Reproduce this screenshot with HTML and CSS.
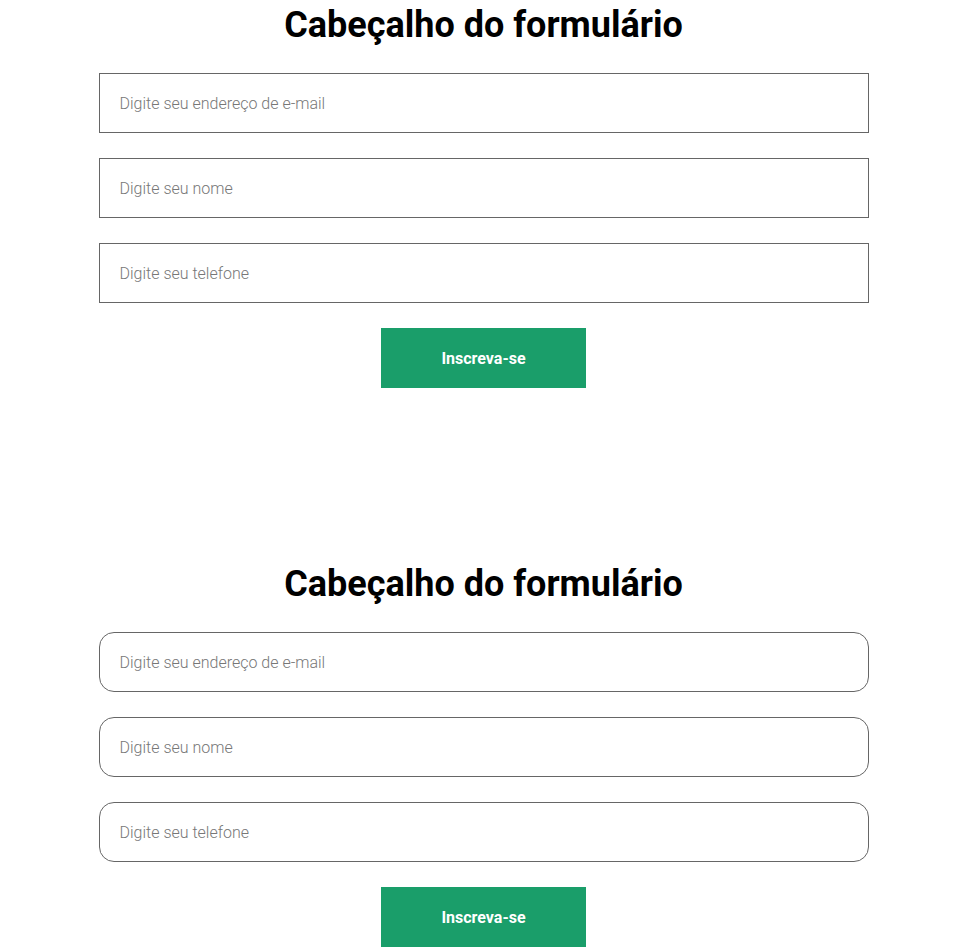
FILE: index.html
```html
<!DOCTYPE html>
<html lang="pt">
<head>
<meta charset="utf-8">
<title>Formulário</title>
<link rel="stylesheet" href="styles.css">
</head>
<body>
<main class="page">
  <form class="signup">
    <h1 class="signup-title">Cabeçalho do formulário</h1>
    <input class="field" type="email" placeholder="Digite seu endereço de e-mail">
    <input class="field" type="text" placeholder="Digite seu nome">
    <input class="field" type="tel" placeholder="Digite seu telefone">
    <button class="submit" type="button">Inscreva-se</button>
  </form>
  <form class="signup signup--rounded">
    <h1 class="signup-title">Cabeçalho do formulário</h1>
    <input class="field" type="email" placeholder="Digite seu endereço de e-mail">
    <input class="field" type="text" placeholder="Digite seu nome">
    <input class="field" type="tel" placeholder="Digite seu telefone">
    <button class="submit" type="button">Inscreva-se</button>
  </form>
</main>
</body>
</html>
```
FILE: styles.css
```css
html, body {
  margin: 0;
  padding: 0;
  background: #fff;
}
body {
  font-family: Roboto, "Liberation Sans", sans-serif;
}
.page {
  width: 770px;
  margin: 0 auto;
  padding-left: 10px;
  display: flex;
  flex-direction: column;
  gap: 171px;
}
.signup {
  display: flex;
  flex-direction: column;
  align-items: center;
  gap: 25px;
}
.signup-title {
  margin: 0 0 -2px;
  font-size: 36px;
  font-weight: 700;
  line-height: 50px;
  color: #000;
  text-align: center;
}
.field {
  box-sizing: border-box;
  width: 100%;
  height: 60px;
  margin: 0;
  padding: 0 20px;
  border: 1px solid #666;
  border-radius: 0;
  background: #fff;
  font-family: Roboto, sans-serif;
  font-size: 16px;
  font-weight: 300;
  color: #333;
  outline: none;
}
.field::placeholder {
  color: #777;
  opacity: 1;
}
.signup--rounded .field {
  border-radius: 15px;
}
.submit {
  box-sizing: border-box;
  width: 205px;
  height: 60px;
  border: none;
  background: #1a9e6a;
  color: #fff;
  font-family: Roboto, sans-serif;
  font-size: 16px;
  font-weight: 700;
  cursor: pointer;
}
```
